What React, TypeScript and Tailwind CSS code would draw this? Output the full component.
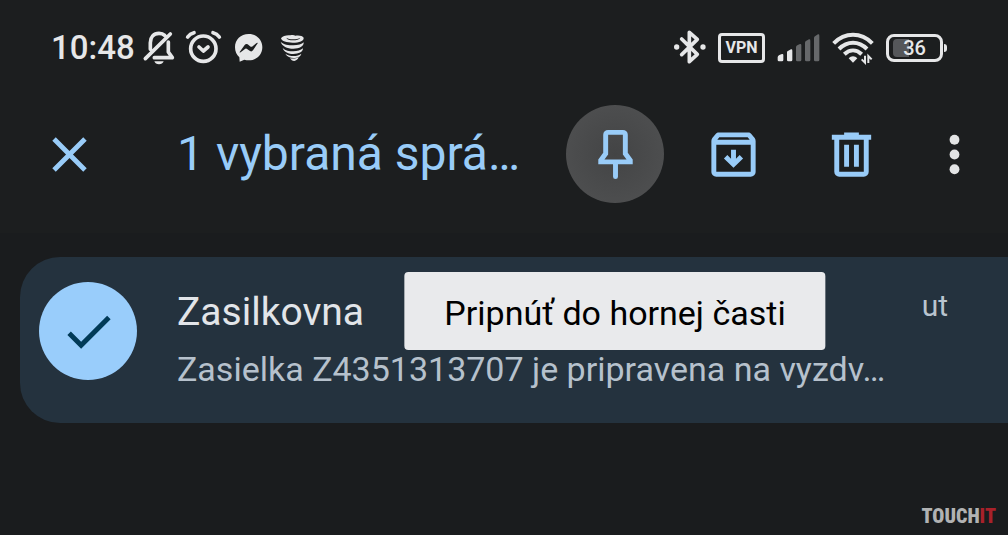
import type { ReactNode } from 'react'

function MaterialIcon({ children, className = 'size-[59px]' }: { children: ReactNode; className?: string }) {
  return (
    <svg className={className} viewBox="0 0 24 24" fill="currentColor" fillRule="evenodd" aria-hidden="true">
      {children}
    </svg>
  )
}

function StatusBar() {
  return (
    <div className="flex h-9 items-center justify-between pl-[51px] pr-[61px] text-[#e6e7e8]">
      <div className="flex items-center gap-[7px]">
        <span className="text-[33px] leading-9 font-medium">10:48</span>

        {/* Muted bell */}
        <svg className="h-9 w-[35px]" viewBox="300 30 105 108" fill="none" stroke="currentColor" strokeWidth="11" strokeLinecap="round" strokeLinejoin="round" aria-hidden="true">
          <path d="M325 88V68c0-16 10-28 26-28 7 0 13 2 17 6M379 66v30l12 17h-54M310 116 385 42" />
          <path d="M337 124h28c-2 6-7 9-14 9s-12-3-14-9z" fill="currentColor" stroke="none" />
        </svg>

        {/* Alarm clock */}
        <svg className="h-9 w-[39px]" viewBox="429 30 117 108" fill="none" stroke="currentColor" strokeWidth="11" strokeLinecap="round" strokeLinejoin="round" aria-hidden="true">
          <circle cx="487" cy="86" r="38" />
          <path d="m474 81 13 12 14-12M440 51c5-7 11-11 19-13M535 51c-5-7-11-11-19-13" />
        </svg>

        {/* Messenger */}
        <svg className="h-9 w-[38px]" viewBox="570 30 114 108" aria-hidden="true">
          <path fill="currentColor" d="M626 42c-24 0-41 17-41 40 0 12 5 23 13 30l1 13 14-6c4 1 9 2 13 2 24 0 41-17 41-39 0-23-17-40-41-40z" />
          <path fill="#1c1e1f" d="m599 96 15-21q4-5 9-2l9 7q2 1 4 0l14-11q4-2 3 1l-14 21q-4 5-9 2l-10-7q-2-1-4 0l-14 11q-4 2-3-1z" />
        </svg>

        {/* Spiral */}
        <svg className="h-9 w-[34px]" viewBox="708 30 102 108" fill="currentColor" aria-hidden="true">
          <path fillRule="evenodd" d="M726 55c4-8 18-10 28-9 6-2 12-1 15 1 10-2 22 0 25 6 1 10-13 15-33 15-18 0-33-4-35-13zm16-2c2 6 10 8 20 8s19-2 22-8c-6 4-13 5-22 5s-14-1-20-5z" />
          <path d="M725 65c8 9 24 11 38 11s26-3 31-9c1 12-13 19-31 19s-35-8-38-21z" />
          <path d="M731 84c8 8 20 10 32 10s22-3 29-9c0 11-13 17-29 17-14 0-28-6-32-18z" />
          <path d="M739 101c7 5 15 7 25 7 9 0 17-3 23-7-2 9-12 13-23 13-10 0-20-4-25-13z" />
          <path d="M753 115c10 2 19 0 26-4-2 8-8 11-13 12-6 0-10-3-13-8z" />
        </svg>
      </div>

      <div className="flex items-center gap-3">
        {/* Bluetooth */}
        <svg className="h-9 w-8" viewBox="42 30 96 108" fill="none" stroke="currentColor" strokeWidth="11" strokeLinejoin="round" strokeLinecap="round" aria-hidden="true">
          <path d="m65 57 47 46-24 22V37l24 21-47 46" />
          <circle cx="50" cy="81" r="8" fill="currentColor" stroke="none" />
          <circle cx="129" cy="81" r="8" fill="currentColor" stroke="none" />
        </svg>

        <span className="flex h-[30px] w-[47px] items-center justify-center rounded-sm border-3 border-current text-base font-bold">
          VPN
        </span>

        {/* Signal, two bars of five */}
        <svg className="h-9 w-[43px]" viewBox="352 30 129 108" aria-hidden="true">
          <path fill="currentColor" d="M354 112q0-5 5-7l8-3q4-1 4 3v15q0 4-4 4h-9q-4 0-4-4zM382 97q0-4 4-5l8-4q4-1 4 4v28q0 4-4 4h-8q-4 0-4-4z" />
          <path fill="#66686a" d="M409 82q0-4 4-6l8-4q4-1 4 4v44q0 4-4 4h-8q-4 0-4-4zM436 68q0-4 4-6l8-4q4-1 4 4v58q0 4-4 4h-8q-4 0-4-4zM463 54q0-4 4-6l8-5q4-1 4 4v73q0 4-4 4h-8q-4 0-4-4z" />
        </svg>

        {/* Wifi */}
        <svg className="h-9 w-[42px]" viewBox="512 30 126 108" fill="none" stroke="currentColor" strokeWidth="12" aria-hidden="true">
          <path d="M517 70c34-34 82-34 116 0M533 87c25-25 59-25 84 0M549 103c16-15 36-15 52 0" />
          <path fill="currentColor" stroke="none" d="M562 115c7-8 19-8 26 0l-13 13z" />
          <path strokeWidth="6" d="M611 107v21l-10-10M621 129v-21l10 10" />
        </svg>

        {/* Battery */}
        <span className="flex items-center gap-px">
          <span className="relative flex h-7 w-[57px] items-center justify-center rounded-lg border-3 border-current text-xl font-medium">
            <span className="absolute inset-y-0.5 left-1 w-4 rounded-l-sm bg-[#55575a]" />
            <span className="relative">36</span>
          </span>
          <span className="h-2 w-[3px] rounded-r-sm bg-current" />
        </span>
      </div>
    </div>
  )
}

function Toolbar() {
  return (
    <div className="mt-[39px] flex items-center px-5 text-[#99ccf8]">
      <button type="button" aria-label="Zavrieť" className="flex size-[98px] shrink-0 items-center justify-center">
        <MaterialIcon>
          <path d="M19 6.41 17.59 5 12 10.59 6.41 5 5 6.41 10.59 12 5 17.59 6.41 19 12 13.41 17.59 19 19 17.59 13.41 12z" />
        </MaterialIcon>
      </button>

      <h1 className="ml-[59px] min-w-0 flex-1 whitespace-nowrap text-[48px] leading-[60px]">1 vybraná sprá…</h1>

      <div className="flex shrink-0 items-center gap-5">
        <div className="relative">
          <button
            type="button"
            aria-label="Pripnúť"
            aria-describedby="pin-tooltip"
            className="flex size-[98px] items-center justify-center rounded-full bg-radial from-[#434445] to-[#515253]"
          >
            <MaterialIcon>
              <path d="M9 2h6a2 2 0 0 1 2 2v7.3l2 2.7v2h-6v5a1 1 0 0 1-2 0v-5H5v-2l2-2.7V4a2 2 0 0 1 2-2zm0 2v8l-1.5 2h9L15 12V4z" />
            </MaterialIcon>
          </button>
          <div
            id="pin-tooltip"
            role="tooltip"
            className="absolute left-1/2 top-[167px] z-10 -translate-x-1/2 whitespace-nowrap rounded-sm bg-[#e9eaec] px-10 pb-[17px] pt-[21px] text-[34px] leading-10 text-black"
          >
            Pripnúť do hornej časti
          </div>
        </div>

        <button type="button" aria-label="Archivovať" className="flex size-[98px] items-center justify-center">
          <MaterialIcon>
            <path d="M20.54 5.23l-1.39-1.68C18.88 3.21 18.47 3 18 3H6c-.47 0-.88.21-1.16.55L3.46 5.23C3.17 5.57 3 6.02 3 6.5V19c0 1.1.9 2 2 2h14c1.1 0 2-.9 2-2V6.5c0-.48-.17-.93-.46-1.27zM6.24 5h11.52l.83 1H5.42zM5 19V8h14v11z" />
            <path d="M11 10.1h2v3.6l1.5-1.5 1.4 1.4-3.9 3.8-3.9-3.8 1.4-1.4 1.5 1.5z" />
          </MaterialIcon>
        </button>

        <button type="button" aria-label="Odstrániť" className="flex size-[98px] items-center justify-center">
          <MaterialIcon>
            <path d="M9 3h6v1h5v2h-1v13a2 2 0 0 1-2 2H7a2 2 0 0 1-2-2V6H4V4h5zM7 6v13h10V6zM9 8h2v9H9zM13 8h2v9h-2z" />
          </MaterialIcon>
        </button>

        <button type="button" aria-label="Ďalšie možnosti" className="flex h-[98px] w-[68px] items-center justify-center text-[#e3e4e5]">
          <MaterialIcon>
            <circle cx="12" cy="6" r="2" />
            <circle cx="12" cy="12" r="2" />
            <circle cx="12" cy="18" r="2" />
          </MaterialIcon>
        </button>
      </div>
    </div>
  )
}

function Conversation() {
  return (
    <article className="ml-5 flex items-start gap-10 rounded-l-[40px] bg-[#24323e] pb-[43px] pl-[19px] pr-[60px] pt-[25px]">
      <div className="flex size-[98px] shrink-0 items-center justify-center rounded-full bg-[#99cdfb] text-[#013a57]">
        <MaterialIcon>
          <path d="M9 16.17 4.83 12l-1.42 1.41L9 19 21 7l-1.41-1.41z" />
        </MaterialIcon>
      </div>
      <div className="h-[98px] min-w-0 flex-1">
        <div className="flex items-start justify-between">
          <h2 className="text-[39px] leading-[60px] text-[#e2e5e9]">Zasilkovna</h2>
          <time className="text-[30px] leading-[48px] text-[#b9c4cf]">ut</time>
        </div>
        <p className="whitespace-nowrap text-[34px] leading-[54px] text-[#b6c1cc]">
          Zasielka Z4351313707 je pripravena na vyzdv…
        </p>
      </div>
    </article>
  )
}

export default function App() {
  return (
    <div className="flex min-h-screen flex-col overflow-hidden bg-[#1a1c1e] font-['Roboto',sans-serif]">
      <header className="bg-[#1c1e1f] pb-[30px] pt-[30px]">
        <StatusBar />
        <Toolbar />
      </header>
      <main className="pt-6">
        <Conversation />
      </main>
      <footer className="mt-auto flex justify-end pb-[7px] pr-3 font-['Liberation_Sans_Narrow','Roboto_Condensed',sans-serif] text-xl font-black leading-6 text-[#b1b2b3]">
        <span>TOUCH</span>
        <span className="text-[#a9212a]">IT</span>
      </footer>
    </div>
  )
}
